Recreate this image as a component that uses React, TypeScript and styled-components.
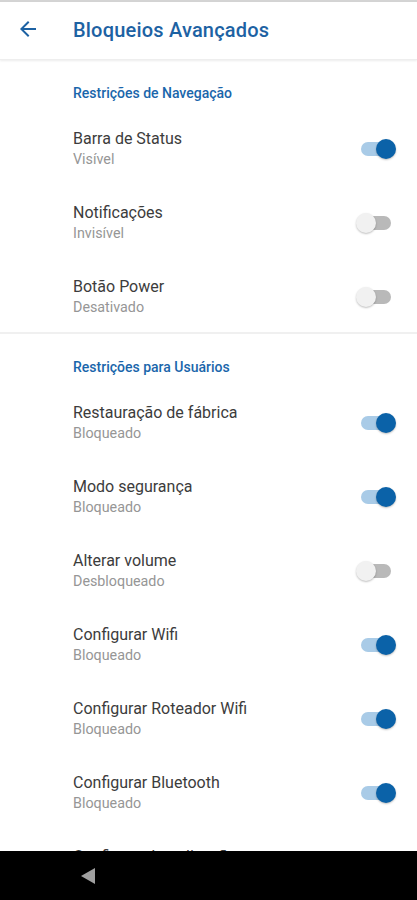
import React, { useState } from 'react'
import styled, { createGlobalStyle } from 'styled-components'

const GlobalStyle = createGlobalStyle`
  html, body {
    margin: 0;
    padding: 0;
    background: #ffffff;
    font-family: Roboto, "Noto Sans", Arial, sans-serif;
  }
  * { box-sizing: border-box; }
`

const Screen = styled.div`
  width: 417px;
  height: 900px;
  display: flex;
  flex-direction: column;
  overflow: hidden;
  background: #ffffff;
`

const StatusStrip = styled.div`
  height: 2px;
  background: #d4d4d4;
  flex-shrink: 0;
`

const Toolbar = styled.header`
  height: 58px;
  flex-shrink: 0;
  display: flex;
  align-items: center;
  background: #ffffff;
  box-shadow: 0 1px 2px rgba(0, 0, 0, 0.08);
  border-bottom: 1px solid #eeeeee;
  position: relative;
  z-index: 1;
`

const BackButton = styled.button`
  width: 73px;
  height: 58px;
  padding: 0 0 4px 16px;
  border: 0;
  background: transparent;
  display: flex;
  align-items: center;
  cursor: pointer;
`

const Title = styled.h1`
  margin: 0 0 2px;
  font-size: 20px;
  font-weight: 500;
  color: #1d62a3;
  letter-spacing: 0.2px;
`

const List = styled.main`
  flex: 1;
  overflow: hidden;
`

const Section = styled.section<{ $divider?: boolean }>`
  border-top: ${({ $divider }) => ($divider ? '2px solid #f0f0f0' : 'none')};
  margin-top: ${({ $divider }) => ($divider ? '-2px' : '0')};
`

const SectionHeader = styled.div`
  padding: 25px 0 11px 73px;
  font-size: 14px;
  line-height: 16px;
  font-weight: 500;
  color: #1a66ab;
`

const Row = styled.div`
  height: 74px;
  padding: 18px 20px 0 73px;
  display: flex;
  align-items: flex-start;
  justify-content: space-between;
`

const RowText = styled.div`
  display: flex;
  flex-direction: column;
`

const RowTitle = styled.span`
  font-size: 16px;
  line-height: 18px;
  color: #3c3c3c;
`

const RowSub = styled.span`
  margin-top: 2px;
  font-size: 14.3px;
  line-height: 18px;
  color: #969696;
`

const SwitchBox = styled.button<{ $on: boolean }>`
  position: relative;
  width: 42px;
  height: 24px;
  margin-top: 7px;
  padding: 0;
  border: 0;
  background: transparent;
  cursor: pointer;
  flex-shrink: 0;
`

const Track = styled.span<{ $on: boolean }>`
  position: absolute;
  left: 6px;
  top: 5px;
  width: 30px;
  height: 14px;
  border-radius: 7px;
  background: ${({ $on }) => ($on ? '#a9cbe7' : '#b9b9b9')};
`

const Thumb = styled.span<{ $on: boolean }>`
  position: absolute;
  top: 2px;
  left: ${({ $on }) => ($on ? '21px' : '1px')};
  width: 20px;
  height: 20px;
  border-radius: 50%;
  background: ${({ $on }) => ($on ? '#0b62a8' : '#f1f1f1')};
  box-shadow: 0 1px 2px rgba(0, 0, 0, 0.25);
`

const NavBar = styled.nav`
  height: 49px;
  flex-shrink: 0;
  background: #000000;
  display: flex;
  align-items: center;
  padding-left: 80px;
`

type Item = { title: string; sub: string; on: boolean }

const navItems: Item[] = [
  { title: 'Barra de Status', sub: 'Visível', on: true },
  { title: 'Notificações', sub: 'Invisível', on: false },
  { title: 'Botão Power', sub: 'Desativado', on: false },
]

const userItems: Item[] = [
  { title: 'Restauração de fábrica', sub: 'Bloqueado', on: true },
  { title: 'Modo segurança', sub: 'Bloqueado', on: true },
  { title: 'Alterar volume', sub: 'Desbloqueado', on: false },
  { title: 'Configurar Wifi', sub: 'Bloqueado', on: true },
  { title: 'Configurar Roteador Wifi', sub: 'Bloqueado', on: true },
  { title: 'Configurar Bluetooth', sub: 'Bloqueado', on: true },
  { title: 'Configurar Localização', sub: 'Bloqueado', on: true },
]

const Toggle: React.FC<{ initial: boolean }> = ({ initial }) => {
  const [on, setOn] = useState(initial)
  return (
    <SwitchBox $on={on} onClick={() => setOn(!on)} aria-pressed={on}>
      <Track $on={on} />
      <Thumb $on={on} />
    </SwitchBox>
  )
}

const SettingRow: React.FC<{ item: Item }> = ({ item }) => (
  <Row>
    <RowText>
      <RowTitle>{item.title}</RowTitle>
      <RowSub>{item.sub}</RowSub>
    </RowText>
    <Toggle initial={item.on} />
  </Row>
)

export default function App() {
  return (
    <Screen>
      <GlobalStyle />
      <StatusStrip />
      <Toolbar>
        <BackButton aria-label="Voltar">
          <svg width="24" height="24" viewBox="0 0 24 24">
            <path
              d="M20 11H7.83l5.59-5.59L12 4l-8 8 8 8 1.41-1.41L7.83 13H20v-2z"
              fill="#1d62a3"
            />
          </svg>
        </BackButton>
        <Title>Bloqueios Avançados</Title>
      </Toolbar>
      <List>
        <Section>
          <SectionHeader>Restrições de Navegação</SectionHeader>
          {navItems.map((it) => (
            <SettingRow key={it.title} item={it} />
          ))}
        </Section>
        <Section $divider>
          <SectionHeader>Restrições para Usuários</SectionHeader>
          {userItems.map((it) => (
            <SettingRow key={it.title} item={it} />
          ))}
        </Section>
      </List>
      <NavBar>
        <svg width="16" height="18" viewBox="0 0 16 18">
          <path d="M15 1 L1 9 L15 17 Z" fill="#a0a0a0" />
        </svg>
      </NavBar>
    </Screen>
  )
}
